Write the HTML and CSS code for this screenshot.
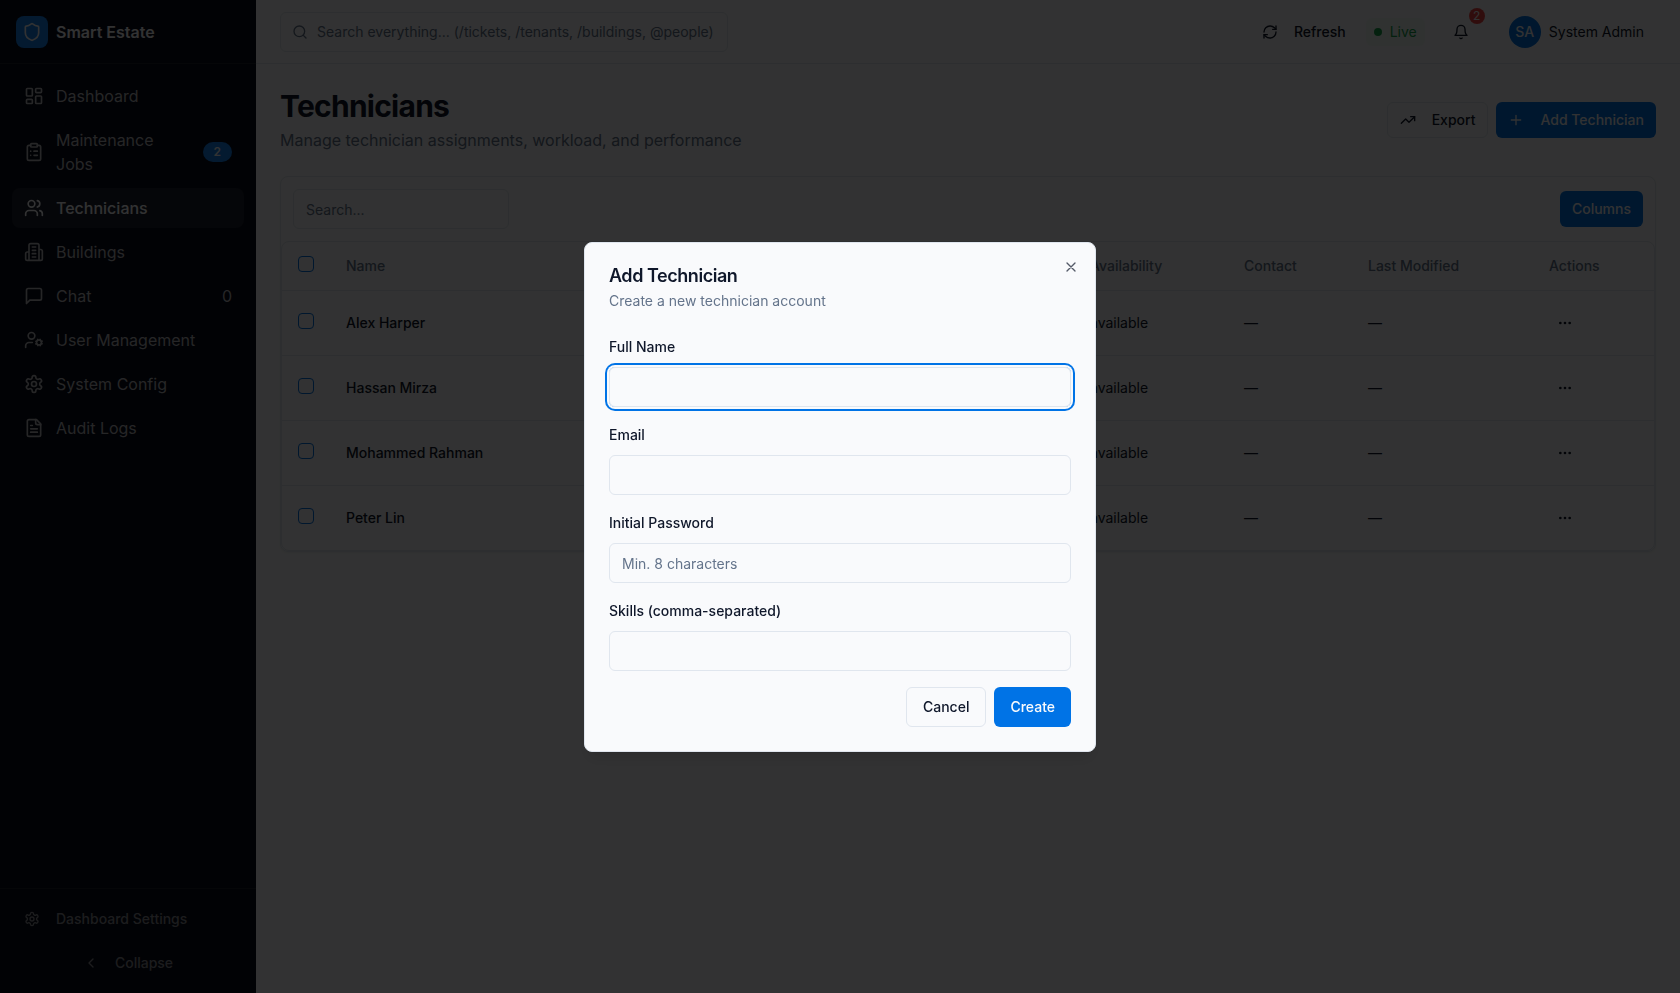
FILE: index.html
```html
<!DOCTYPE html>
<html lang="en">
<head>
<meta charset="utf-8">
<meta name="viewport" content="width=device-width, initial-scale=1">
<title>Technicians - Smart Estate</title>
<link rel="stylesheet" href="styles.css">
</head>
<body>
<svg class="sprite" aria-hidden="true">
  <symbol id="i-gear" viewBox="0 0 24 24"><path d="M12.22 2h-.44a2 2 0 0 0-2 2v.18a2 2 0 0 1-1 1.73l-.43.25a2 2 0 0 1-2 0l-.15-.08a2 2 0 0 0-2.73.73l-.22.38a2 2 0 0 0 .73 2.73l.15.1a2 2 0 0 1 1 1.72v.51a2 2 0 0 1-1 1.74l-.15.09a2 2 0 0 0-.73 2.73l.22.38a2 2 0 0 0 2.73.73l.15-.08a2 2 0 0 1 2 0l.43.25a2 2 0 0 1 1 1.73V20a2 2 0 0 0 2 2h.44a2 2 0 0 0 2-2v-.18a2 2 0 0 1 1-1.73l.43-.25a2 2 0 0 1 2 0l.15.08a2 2 0 0 0 2.73-.73l.22-.39a2 2 0 0 0-.73-2.73l-.15-.08a2 2 0 0 1-1-1.74v-.5a2 2 0 0 1 1-1.74l.15-.09a2 2 0 0 0 .73-2.73l-.22-.38a2 2 0 0 0-2.73-.73l-.15.08a2 2 0 0 1-2 0l-.43-.25a2 2 0 0 1-1-1.73V4a2 2 0 0 0-2-2z"/><circle cx="12" cy="12" r="3"/></symbol>
  <symbol id="i-more" viewBox="0 0 24 24"><circle cx="12" cy="12" r="1"/><circle cx="19" cy="12" r="1"/><circle cx="5" cy="12" r="1"/></symbol>
</svg>

<div class="app">
  <aside class="sidebar">
    <div class="brand">
      <span class="brand-mark"><svg class="icon icon-md" viewBox="0 0 24 24"><path d="M20 13c0 5-3.500 7.500-7.660 8.950a1 1 0 0 1-.67-.01C7.500 20.500 4 18 4 13V6a1 1 0 0 1 1-1c2 0 4.500-1.200 6.240-2.720a1.170 1.170 0 0 1 1.520 0C14.510 3.810 17 5 19 5a1 1 0 0 1 1 1z"/></svg></span>
      <span class="brand-name">Smart Estate</span>
    </div>
    <nav class="nav" aria-label="Main">
      <a class="nav-item" href="#dashboard">
        <svg class="icon icon-md" viewBox="0 0 24 24"><rect width="7" height="9" x="3" y="3" rx="1"/><rect width="7" height="5" x="14" y="3" rx="1"/><rect width="7" height="9" x="14" y="12" rx="1"/><rect width="7" height="5" x="3" y="16" rx="1"/></svg>
        <span class="nav-label">Dashboard</span>
      </a>
      <a class="nav-item" href="#jobs">
        <svg class="icon icon-md" viewBox="0 0 24 24"><rect width="8" height="4" x="8" y="2" rx="1" ry="1"/><path d="M16 4h2a2 2 0 0 1 2 2v14a2 2 0 0 1-2 2H6a2 2 0 0 1-2-2V6a2 2 0 0 1 2-2h2M12 11h4M12 16h4M8 11h.01M8 16h.01"/></svg>
        <span class="nav-label">Maintenance Jobs</span>
        <span class="nav-badge">2</span>
      </a>
      <a class="nav-item is-active" href="#technicians" aria-current="page">
        <svg class="icon icon-md" viewBox="0 0 24 24"><path d="M16 21v-2a4 4 0 0 0-4-4H6a4 4 0 0 0-4 4v2"/><circle cx="9" cy="7" r="4"/><path d="M22 21v-2a4 4 0 0 0-3-3.870M16 3.130a4 4 0 0 1 0 7.750"/></svg>
        <span class="nav-label">Technicians</span>
      </a>
      <a class="nav-item" href="#buildings">
        <svg class="icon icon-md" viewBox="0 0 24 24"><path d="M6 22V4a2 2 0 0 1 2-2h8a2 2 0 0 1 2 2v18ZM6 12H4a2 2 0 0 0-2 2v6a2 2 0 0 0 2 2h2M18 9h2a2 2 0 0 1 2 2v9a2 2 0 0 1-2 2h-2M10 6h4M10 10h4M10 14h4M10 18h4"/></svg>
        <span class="nav-label">Buildings</span>
      </a>
      <a class="nav-item" href="#chat">
        <svg class="icon icon-md" viewBox="0 0 24 24"><path d="M21 15a2 2 0 0 1-2 2H7l-4 4V5a2 2 0 0 1 2-2h14a2 2 0 0 1 2 2z"/></svg>
        <span class="nav-label">Chat</span>
        <span>0</span>
      </a>
      <a class="nav-item" href="#users">
        <svg class="icon icon-md" viewBox="0 0 24 24"><circle cx="18" cy="15" r="3"/><circle cx="9" cy="7" r="4"/><path d="M10 15H6a4 4 0 0 0-4 4v2M21.700 16.400l-.9-.3M15.200 13.900l-.9-.3M16.600 18.700l.3-.9M19.100 12.200l.3-.9M19.600 18.700l-.4-1M16.800 12.300l-.4-1M14.300 16.600l1-.4M20.700 13.800l1-.4"/></svg>
        <span class="nav-label">User Management</span>
      </a>
      <a class="nav-item" href="#config">
        <svg class="icon icon-md"><use href="#i-gear"/></svg>
        <span class="nav-label">System Config</span>
      </a>
      <a class="nav-item" href="#audit">
        <svg class="icon icon-md" viewBox="0 0 24 24"><path d="M15 2H6a2 2 0 0 0-2 2v16a2 2 0 0 0 2 2h12a2 2 0 0 0 2-2V7Z"/><path d="M14 2v4a2 2 0 0 0 2 2h4M10 9H8M16 13H8M16 17H8"/></svg>
        <span class="nav-label">Audit Logs</span>
      </a>
    </nav>
    <div class="side-foot">
      <button class="side-btn" type="button"><svg class="icon"><use href="#i-gear"/></svg>Dashboard Settings</button>
      <button class="side-btn is-centered" type="button"><svg class="icon" viewBox="0 0 24 24"><path d="m15 18-6-6 6-6"/></svg>Collapse</button>
    </div>
  </aside>

  <div class="page">
    <header class="topbar">
      <label class="global-search">
        <svg class="icon" viewBox="0 0 24 24"><circle cx="11" cy="11" r="8"/><path d="m21 21-4.300-4.300"/></svg>
        <input class="input" type="text" aria-label="Search everything" placeholder="Search everything... (/tickets, /tenants, /buildings, @people)">
      </label>
      <div class="top-actions">
        <div class="status-group">
          <button class="btn btn-ghost" type="button"><svg class="icon" viewBox="0 0 24 24"><path d="M3 12a9 9 0 0 1 9-9 9.750 9.750 0 0 1 6.740 2.740L21 8"/><path d="M21 3v5h-5M21 12a9 9 0 0 1-9 9 9.750 9.750 0 0 1-6.740-2.740L3 16"/><path d="M8 16H3v5"/></svg>Refresh</button>
          <span class="live"><span class="live-dot"></span>Live</span>
        </div>
        <button class="bell" type="button" aria-label="Notifications">
          <svg class="icon" viewBox="0 0 24 24"><path d="M10.300 21a1.940 1.940 0 0 0 3.400 0M6 8a6 6 0 0 1 12 0c0 7 3 9 3 9H3s3-2 3-9"/></svg>
          <span class="bell-count">2</span>
        </button>
        <button class="account" type="button"><span class="avatar">SA</span>System Admin</button>
      </div>
    </header>

    <main class="main">
      <div class="page-head">
        <div class="page-heading">
          <h1 class="page-title">Technicians</h1>
          <p class="page-sub">Manage technician assignments, workload, and performance</p>
        </div>
        <div class="page-actions">
          <button class="btn btn-outline" type="button"><svg class="icon" viewBox="0 0 24 24"><path d="M22 7l-8.500 8.500-5-5L2 17"/><path d="M16 7h6v6"/></svg>Export</button>
          <button class="btn btn-primary" type="button"><svg class="icon" viewBox="0 0 24 24"><path d="M5 12h14M12 5v14"/></svg>Add Technician</button>
        </div>
      </div>

      <section class="card">
        <div class="card-tools">
          <input class="input table-search" type="text" aria-label="Search technicians" placeholder="Search...">
          <button class="btn btn-primary" type="button">Columns</button>
        </div>
        <div class="table-wrap">
          <table class="table">
            <thead>
              <tr><th class="col-check"><input class="check" type="checkbox" aria-label="Select all"></th><th>Name</th><th class="col-avail">Availability</th><th class="col-contact">Contact</th><th class="col-modified">Last Modified</th><th class="col-actions">Actions</th></tr>
            </thead>
            <tbody>
              <tr><td class="col-check"><input class="check" type="checkbox" aria-label="Select Alex Harper"></td><td class="name">Alex Harper</td><td>available</td><td>—</td><td>—</td><td><button class="more" type="button" aria-label="Actions for Alex Harper"><svg class="icon"><use href="#i-more"/></svg></button></td></tr>
              <tr><td class="col-check"><input class="check" type="checkbox" aria-label="Select Hassan Mirza"></td><td class="name">Hassan Mirza</td><td>available</td><td>—</td><td>—</td><td><button class="more" type="button" aria-label="Actions for Hassan Mirza"><svg class="icon"><use href="#i-more"/></svg></button></td></tr>
              <tr><td class="col-check"><input class="check" type="checkbox" aria-label="Select Mohammed Rahman"></td><td class="name">Mohammed Rahman</td><td>available</td><td>—</td><td>—</td><td><button class="more" type="button" aria-label="Actions for Mohammed Rahman"><svg class="icon"><use href="#i-more"/></svg></button></td></tr>
              <tr><td class="col-check"><input class="check" type="checkbox" aria-label="Select Peter Lin"></td><td class="name">Peter Lin</td><td>available</td><td>—</td><td>—</td><td><button class="more" type="button" aria-label="Actions for Peter Lin"><svg class="icon"><use href="#i-more"/></svg></button></td></tr>
            </tbody>
          </table>
        </div>
      </section>
    </main>
  </div>
</div>

<div class="overlay">
  <div class="modal" role="dialog" aria-modal="true" aria-labelledby="dlg-title">
    <div class="modal-head">
      <h2 class="modal-title" id="dlg-title">Add Technician</h2>
      <p class="modal-sub">Create a new technician account</p>
    </div>
    <form class="form">
      <div class="field"><label for="full-name">Full Name</label><input class="input is-focused" id="full-name" type="text"></div>
      <div class="field"><label for="email">Email</label><input class="input" id="email" type="email"></div>
      <div class="field"><label for="password">Initial Password</label><input class="input" id="password" type="password" placeholder="Min. 8 characters"></div>
      <div class="field"><label for="skills">Skills (comma-separated)</label><input class="input" id="skills" type="text"></div>
      <div class="form-actions">
        <button class="btn btn-outline btn-lg" type="button">Cancel</button>
        <button class="btn btn-primary btn-lg" type="submit">Create</button>
      </div>
    </form>
    <button class="modal-close" type="button" aria-label="Close"><svg class="icon" viewBox="0 0 24 24"><path d="M18 6 6 18M6 6l12 12"/></svg></button>
  </div>
</div>
</body>
</html>
```
FILE: styles.css
```css
:root {
  --bg: #f9fafc;
  --fg: #0f172a;
  --muted: #64748b;
  --border: #e0e6ee;
  --primary: #0073e6;
  --side-bg: #080c1a;
}

* { box-sizing: border-box; }

body {
  margin: 0;
  background: var(--bg);
  color: var(--fg);
  font-family: Inter, "Liberation Sans", sans-serif;
  font-size: 16px;
  line-height: 24px;
}

h1, h2, p { margin: 0; }
button, input { font: inherit; color: inherit; }
button { border: 0; padding: 0; background: none; }

.sprite { position: absolute; width: 0; height: 0; }

.icon {
  width: 16px;
  height: 16px;
  flex: none;
  fill: none;
  stroke: currentColor;
  stroke-width: 2;
  stroke-linecap: round;
  stroke-linejoin: round;
}
.icon-md { width: 20px; height: 20px; }

.app { display: flex; min-height: 100vh; }

/* Sidebar */
.sidebar {
  display: flex;
  flex-direction: column;
  flex: none;
  width: 256px;
  background: var(--side-bg);
  color: #bcbdc1;
}
.brand {
  display: flex;
  align-items: center;
  gap: 8px;
  height: 64px;
  padding: 0 16px;
  border-bottom: 1px solid #1c202c;
}
.brand-mark {
  display: grid;
  place-items: center;
  width: 32px;
  height: 32px;
  border-radius: 8px;
  background: #1482f0;
  color: #f8fafc;
}
.brand-name { color: #f8fafc; font-weight: 600; }
.nav {
  display: flex;
  flex: 1;
  flex-direction: column;
  gap: 4px;
  padding: 12px;
}
.nav-item {
  display: flex;
  align-items: center;
  gap: 12px;
  padding: 8px 12px;
  border-radius: 8px;
  color: inherit;
  text-decoration: none;
}
.nav-item.is-active { background: #1b1f2d; color: #f8fafc; font-weight: 500; }
.nav-label { flex: 1; }
.nav-badge {
  padding: 2px 11px;
  border-radius: 10px;
  background: #1482f0;
  color: #f8fafc;
  font-size: 12px;
  font-weight: 600;
  line-height: 16px;
}
.side-foot {
  display: flex;
  flex-direction: column;
  gap: 8px;
  padding: 12px;
  border-top: 1px solid #1c202c;
}
.side-btn {
  display: flex;
  align-items: center;
  gap: 16px;
  height: 36px;
  padding: 0 12px;
  color: #8c8e94;
  font-size: 14px;
  font-weight: 500;
}
.side-btn.is-centered { justify-content: center; }

/* Top bar */
.page { flex: 1; min-width: 0; }
.topbar {
  display: flex;
  align-items: center;
  justify-content: space-between;
  height: 64px;
  padding: 0 24px;
  border-bottom: 1px solid var(--border);
}
.global-search {
  position: relative;
  display: flex;
  align-items: center;
  flex: 0 1 448px;
  color: var(--muted);
}
.global-search .icon { position: absolute; left: 12px; }
.global-search .input { padding-left: 36px; }
.top-actions { display: flex; align-items: center; gap: 16px; }
.status-group { display: flex; align-items: center; gap: 8px; }
.live {
  display: flex;
  align-items: center;
  gap: 8px;
  padding: 4px 8px;
  border-radius: 6px;
  background: #f0faf6;
  color: #16a34a;
  font-size: 14px;
  line-height: 20px;
}
.live-dot { width: 8px; height: 8px; border-radius: 50%; background: #16a34a; }
.bell {
  position: relative;
  display: grid;
  place-items: center;
  width: 40px;
  height: 40px;
}
.bell-count {
  position: absolute;
  top: -4px;
  right: -4px;
  width: 16px;
  height: 16px;
  border-radius: 50%;
  background: #ef4444;
  color: #f8fafc;
  font-size: 12px;
  line-height: 16px;
}
.account {
  display: flex;
  align-items: center;
  gap: 8px;
  padding: 0 12px;
  font-size: 14px;
}
.avatar {
  display: grid;
  place-items: center;
  width: 32px;
  height: 32px;
  border-radius: 50%;
  background: var(--primary);
  color: #f8fafc;
  font-weight: 500;
}

/* Controls */
.btn {
  display: inline-flex;
  align-items: center;
  justify-content: center;
  gap: 16px;
  height: 36px;
  padding: 0 12px;
  border-radius: 6px;
  font-size: 14px;
  font-weight: 500;
  line-height: 20px;
}
.btn-outline { border: 1px solid var(--border); }
.btn-primary { background: var(--primary); color: #f8fafc; }
.btn-lg { height: 40px; padding: 0 16px; }
.input {
  width: 100%;
  height: 40px;
  padding: 0 12px;
  border: 1px solid var(--border);
  border-radius: 6px;
  background: transparent;
  font-size: 14px;
  line-height: 20px;
  outline: none;
  appearance: none;
}
.input::placeholder { color: var(--muted); opacity: 1; }
.input:focus, .input.is-focused { box-shadow: 0 0 0 2px var(--bg), 0 0 0 4px var(--primary); }

/* Page content */
.main { display: flex; flex-direction: column; gap: 24px; padding: 24px; }
.page-head { display: flex; align-items: center; justify-content: space-between; }
.page-heading { display: flex; flex-direction: column; gap: 4px; }
.page-title { font-size: 30px; font-weight: 700; line-height: 36px; letter-spacing: -0.025em; }
.page-sub { color: var(--muted); }
.page-actions { display: flex; gap: 8px; }

.card {
  border: 1px solid var(--border);
  border-radius: 8px;
  box-shadow: 0 1px 2px rgba(0, 0, 0, 0.05);
}
.card-tools {
  display: flex;
  align-items: center;
  justify-content: space-between;
  padding: 12px;
}
.table-search { width: 216px; }
.table-wrap {
  border: 1px solid var(--border);
  border-radius: 8px;
  overflow: hidden;
}
.table {
  width: 100%;
  table-layout: fixed;
  border-collapse: separate;
  border-spacing: 0;
  font-size: 14px;
  line-height: 20px;
  text-align: left;
}
.table th { height: 49px; padding: 0 16px; border-bottom: 1px solid var(--border); color: var(--muted); font-weight: 500; }
.table td { height: 65px; padding: 0 16px; border-bottom: 1px solid var(--border); }
.table tbody tr:last-child td { height: 64px; border-bottom: 0; }
.table .col-check { width: 48px; padding-bottom: 4px; }
.col-avail { width: 158px; }
.col-contact { width: 124px; }
.col-modified { width: 181px; }
.col-actions { width: 121px; }
.table .col-avail, .table td:nth-child(3) { padding-left: 20px; }
.name { font-weight: 500; }
.check {
  display: block;
  width: 16px;
  height: 16px;
  margin: 0;
  border: 1px solid var(--primary);
  border-radius: 4px;
  appearance: none;
}
.more { display: grid; place-items: center; width: 32px; height: 32px; }

/* Dialog */
.overlay {
  position: fixed;
  inset: 0;
  display: grid;
  place-items: center;
  padding-top: 1px;
  background: rgba(0, 0, 0, 0.8);
}
.modal {
  position: relative;
  display: flex;
  flex-direction: column;
  gap: 24px;
  width: 100%;
  max-width: 512px;
  padding: 24px;
  border: 1px solid var(--border);
  border-radius: 8px;
  background: var(--bg);
  box-shadow: 0 10px 15px -3px rgba(0, 0, 0, 0.1), 0 4px 6px -4px rgba(0, 0, 0, 0.1);
}
.modal-head { display: flex; flex-direction: column; gap: 6px; }
.modal-title { font-size: 18px; font-weight: 600; line-height: 18px; letter-spacing: -0.025em; }
.modal-sub { color: var(--muted); font-size: 14px; line-height: 20px; }
.form { display: flex; flex-direction: column; gap: 16px; }
.field { display: flex; flex-direction: column; gap: 8px; }
.field label { font-size: 14px; font-weight: 500; line-height: 24px; }
.form-actions { display: flex; justify-content: flex-end; gap: 8px; }
.modal-close { position: absolute; top: 16px; right: 16px; display: flex; opacity: 0.7; }
```
